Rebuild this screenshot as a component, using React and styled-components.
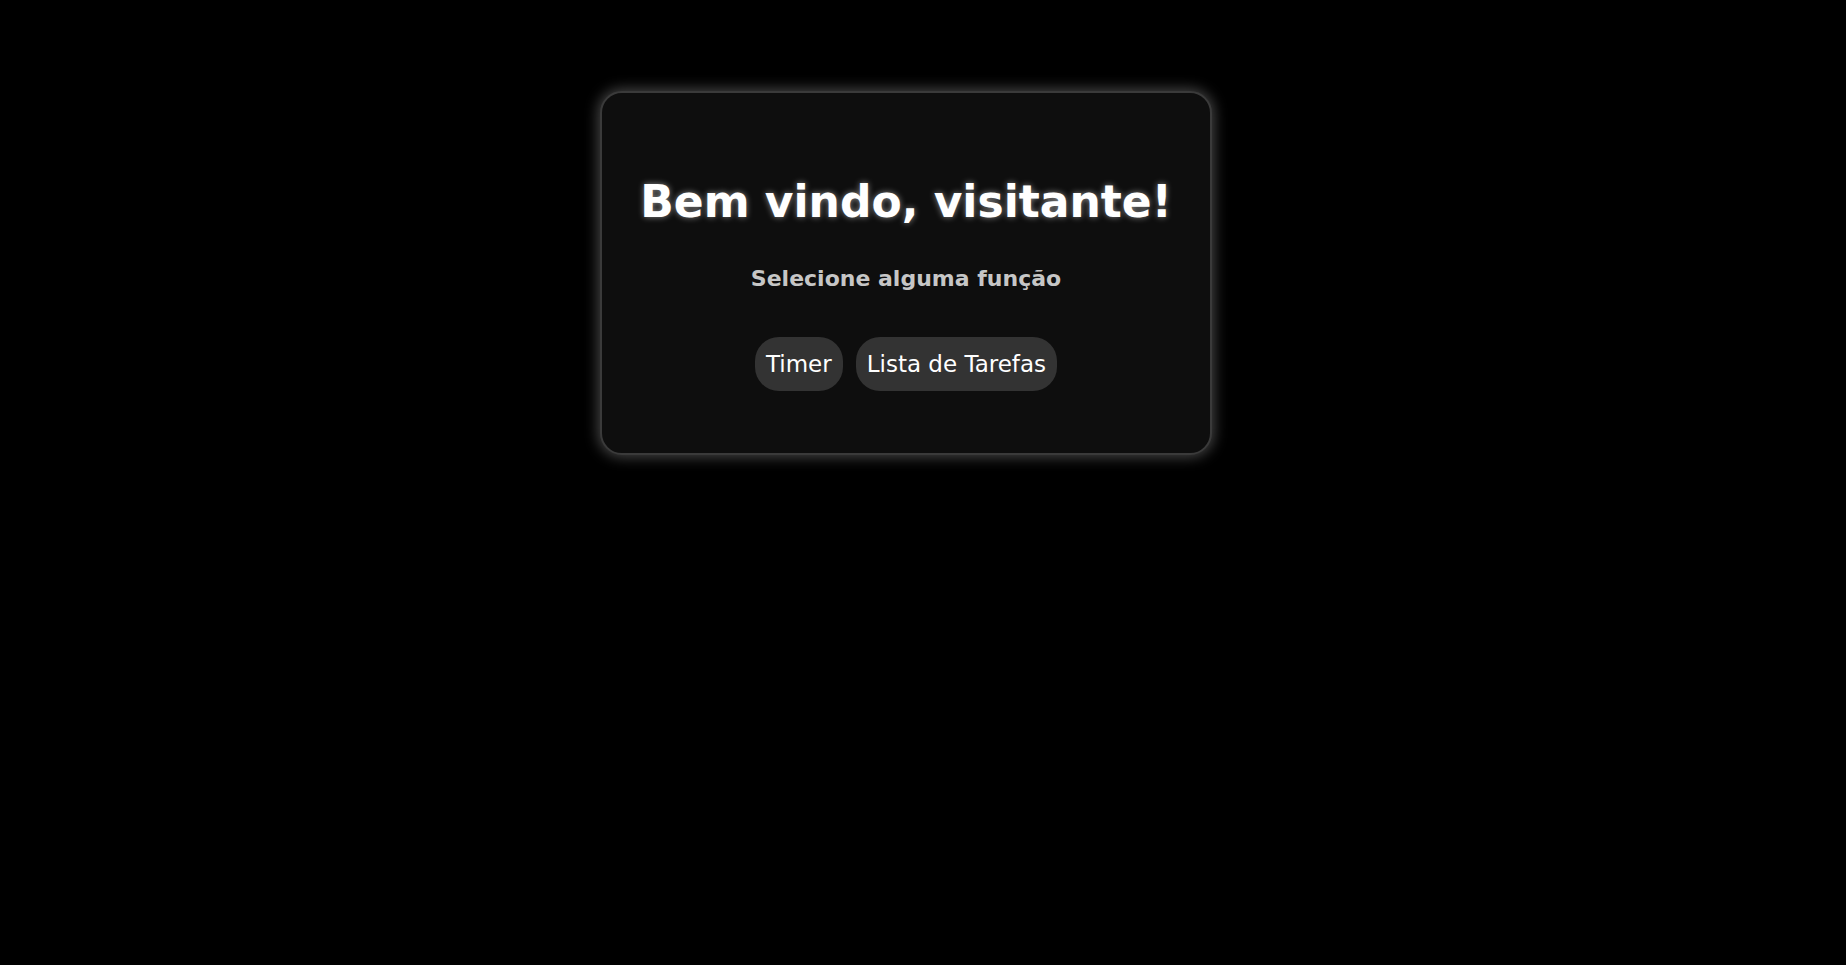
import React from "react";
import styled, { createGlobalStyle } from "styled-components";

const Global = createGlobalStyle`
  html, body {
    margin: 0;
    padding: 0;
    background: #000;
    min-height: 100%;
  }
  body {
    font-family: "DejaVu Sans", "Liberation Sans", sans-serif;
    color: #fff;
  }
`;

const Page = styled.main`
  min-height: 965px;
  background: #000;
  display: flex;
  justify-content: center;
  align-items: flex-start;
  padding: 91px 34px 0 0;
  box-sizing: border-box;
`;

const Card = styled.section`
  width: 612px;
  box-sizing: border-box;
  background: #0e0e0e;
  border: 2px solid #3a3a3a;
  border-radius: 22px;
  box-shadow: 0 0 14px 2px rgba(255, 255, 255, 0.28);
  display: flex;
  flex-direction: column;
  align-items: center;
  padding: 87px 20px 62px;
`;

const Title = styled.h1`
  margin: 0;
  font-family: "DejaVu Sans", sans-serif;
  font-weight: 700;
  font-size: 44px;
  line-height: 44px;
  color: #fff;
  text-shadow: 0 0 6px rgba(255, 255, 255, 0.5);
`;

const Subtitle = styled.p`
  margin: 40px 0 0;
  font-family: "DejaVu Sans", sans-serif;
  font-weight: 700;
  font-size: 22px;
  line-height: 30px;
  color: #c6c6c6;
`;

const Actions = styled.div`
  display: flex;
  gap: 13px;
  margin-top: 43px;
`;

const Pill = styled.button`
  height: 54px;
  padding: 0 11px;
  border: none;
  border-radius: 24px;
  background: #333;
  color: #fff;
  font-family: "DejaVu Sans", sans-serif;
  font-weight: 400;
  font-size: 23px;
  cursor: pointer;
`;

export default function App() {
  return (
    <>
      <Global />
      <Page>
        <Card>
          <Title>Bem vindo, visitante!</Title>
          <Subtitle>Selecione alguma função</Subtitle>
          <Actions>
            <Pill>Timer</Pill>
            <Pill>Lista de Tarefas</Pill>
          </Actions>
        </Card>
      </Page>
    </>
  );
}
